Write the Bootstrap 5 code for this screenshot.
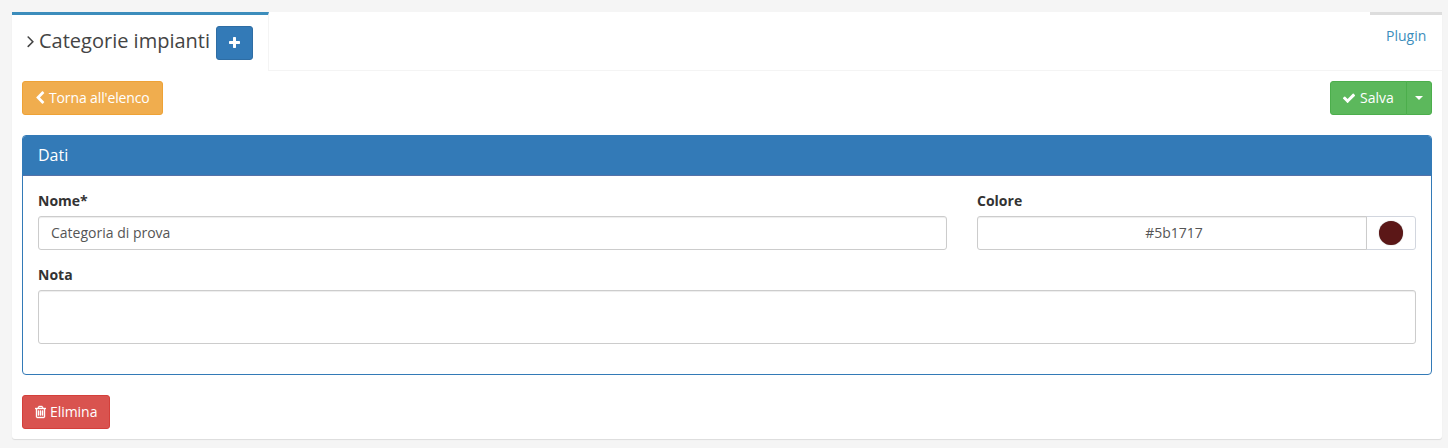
<!DOCTYPE html>
<html lang="it">
<head>
<meta charset="utf-8">
<title>Categorie impianti</title>
<link href="https://cdn.jsdelivr.net/npm/bootstrap@5.3.0/dist/css/bootstrap.min.css" rel="stylesheet">
<style>
body{background:#f5f5f5;font:14px/20px "Open Sans",sans-serif;color:#333;height:448px;overflow:hidden}
.panel-wrap{margin:12px 6px 0 12px;height:427px;background:#fff;border-radius:3px;box-shadow:0 1px 1px rgba(0,0,0,.1)}
.tabs{height:59px}
.tab-main{width:257px;border-top:3px solid #3c8dbc;border-right:1px solid #f4f4f4;padding:11px 15px 0}
.tab-gap{border-bottom:1px solid #f4f4f4}
.tab-plugin{width:72px;border-top:3px solid #ddd;border-bottom:1px solid #f4f4f4;padding:11px 0 0 16px;color:#3c8dbc}
.tab-arrow{margin-top:5px;fill:#444}
.title{font-size:20px;line-height:30px;color:#444;margin:0 5px;width:172px;font-weight:400;white-space:nowrap}
.btn{--bs-btn-font-size:14px;--bs-btn-line-height:20px;--bs-btn-padding-x:12px;--bs-btn-padding-y:6px;--bs-btn-border-radius:3px;--bs-btn-color:#fff;height:34px;white-space:nowrap}
.btn svg{height:14px;fill:#fff;flex:none}
.b-blue{background:#337ab7;border-color:#2e6da4}
.b-orange{background:#f0ad4e;border-color:#eea236;width:141px;letter-spacing:-.13px}
.b-green{background:#5cb85c;border-color:#4cae4c}
.b-save{width:77px;padding-left:11px}
.b-red{background:#d9534f;border-color:#d43f3a;width:88px;letter-spacing:-.05px}
.b-red svg{stroke:#fff;stroke-width:50}
.caret{border:4px solid transparent;border-top-color:#fff;border-bottom:0}
.content{padding:10px}
.data-card{--bs-card-border-color:#337ab7;--bs-card-border-radius:4px;--bs-card-inner-border-radius:3px;--bs-card-cap-bg:#337ab7;height:240px;margin:20px 0;color:#333}
.data-card .card-header{height:40px;padding:9px 15px;color:#fff;font-size:16px;border-bottom:1px solid #5572a8}
.data-card .card-body{padding:15px}
.form-label{font-weight:700;margin-bottom:5px;display:block}
.note-label{margin-top:15px}
.form-control{font-size:14px;line-height:20px;padding:5px 12px 7px;height:34px;border-color:#ccc;border-radius:3px;color:#555;box-shadow:inset 0 1px 1px rgba(0,0,0,.075)}
.hex-field{padding-left:16px}
textarea.form-control{height:54px;resize:none}
.input-group-text{width:50px;background:#fff;border-color:#d2d6de;border-radius:3px;padding:0 0 0 12px}
.dot{width:24px;height:24px;border-radius:50%;background:#5b1717;box-shadow:0 0 1px #777}
.c-name{width:909px}
.c-color{width:439px}
</style>
</head>
<body>
<main class="panel-wrap">
  <div class="tabs d-flex">
    <div class="tab-main d-flex align-items-start">
      <svg class="tab-arrow" width="7" height="20" viewBox="571 0 608 1792"><path d="M1171 960q0 13-10 23l-466 466q-10 10-23 10t-23-10l-50-50q-10-10-10-23t10-23l393-393-393-393q-10-10-10-23t10-23l50-50q10-10 23-10t23 10l466 466q10 10 10 23z"/></svg>
      <h1 class="title">Categorie impianti</h1>
      <button class="btn b-blue d-flex align-items-center" aria-label="Aggiungi"><svg width="11" viewBox="192 0 1408 1792"><path d="M1600 736v192q0 40-28 68t-68 28h-416v416q0 40-28 68t-68 28h-192q-40 0-68-28t-28-68v-416h-416q-40 0-68-28t-28-68v-192q0-40 28-68t68-28h416v-416q0-40 28-68t68-28h192q40 0 68 28t28 68v416h416q40 0 68 28t28 68z"/></svg></button>
    </div>
    <div class="tab-gap flex-grow-1"></div>
    <div class="tab-plugin">Plugin</div>
  </div>
  <div class="content">
    <div class="d-flex justify-content-between">
      <button class="btn b-orange d-flex align-items-center"><svg width="10" viewBox="256 0 1280 1792" class="me-1"><path d="M1427 301l-531 531 531 531q19 19 19 45t-19 45l-166 166q-19 19-45 19t-45-19l-742-742q-19-19-19-45t19-45l742-742q19-19 45-19t45 19l166 166q19 19 19 45t-19 45z"/></svg>Torna all'elenco</button>
      <div class="btn-group">
        <button class="btn b-green b-save d-flex align-items-center"><svg width="14" viewBox="0 0 1792 1792" class="me-1"><path d="M1671 566q0 40-28 68l-724 724-136 136q-28 28-68 28t-68-28l-136-136-362-362q-28-28-28-68t28-68l136-136q28-28 68-28t68 28l294 295 656-657q28-28 68-28t68 28l136 136q28 28 28 68z"/></svg>Salva</button>
        <button class="btn b-green d-flex align-items-center px-2" aria-label="Altro"><span class="caret"></span></button>
      </div>
    </div>
    <section class="card data-card">
      <div class="card-header">Dati</div>
      <div class="card-body">
        <div class="d-flex justify-content-between">
          <div class="c-name"><label class="form-label">Nome*</label><input class="form-control" value="Categoria di prova"></div>
          <div class="c-color"><label class="form-label">Colore</label>
            <div class="input-group flex-nowrap"><input class="form-control hex-field text-center" value="#5b1717"><span class="input-group-text"><span class="dot"></span></span></div>
          </div>
        </div>
        <label class="form-label note-label">Nota</label>
        <textarea class="form-control"></textarea>
      </div>
    </section>
    <button class="btn b-red d-flex align-items-center"><svg width="11" viewBox="192 0 1408 1792" class="me-1"><path d="M704 736v576q0 14-9 23t-23 9h-64q-14 0-23-9t-9-23v-576q0-14 9-23t23-9h64q14 0 23 9t9 23zm256 0v576q0 14-9 23t-23 9h-64q-14 0-23-9t-9-23v-576q0-14 9-23t23-9h64q14 0 23 9t9 23zm256 0v576q0 14-9 23t-23 9h-64q-14 0-23-9t-9-23v-576q0-14 9-23t23-9h64q14 0 23 9t9 23zm128 724v-948h-896v948q0 22 7 40.5t14.5 27 10.5 8.5h832q3 0 10.5-8.5t14.5-27 7-40.5zm-672-1076h448l-48-117q-7-9-17-11h-317q-10 2-17 11zm928 32v64q0 14-9 23t-23 9h-96v948q0 83-47 143.5t-113 60.5h-832q-66 0-113-58.5t-47-141.5v-952h-96q-14 0-23-9t-9-23v-64q0-14 9-23t23-9h309l70-167q15-37 54-63t79-26h320q40 0 79 26t54 63l70 167h309q14 0 23 9t9 23z"/></svg>Elimina</button>
  </div>
</main>
<script src="https://cdn.jsdelivr.net/npm/bootstrap@5.3.0/dist/js/bootstrap.bundle.min.js"></script>
</body>
</html>
